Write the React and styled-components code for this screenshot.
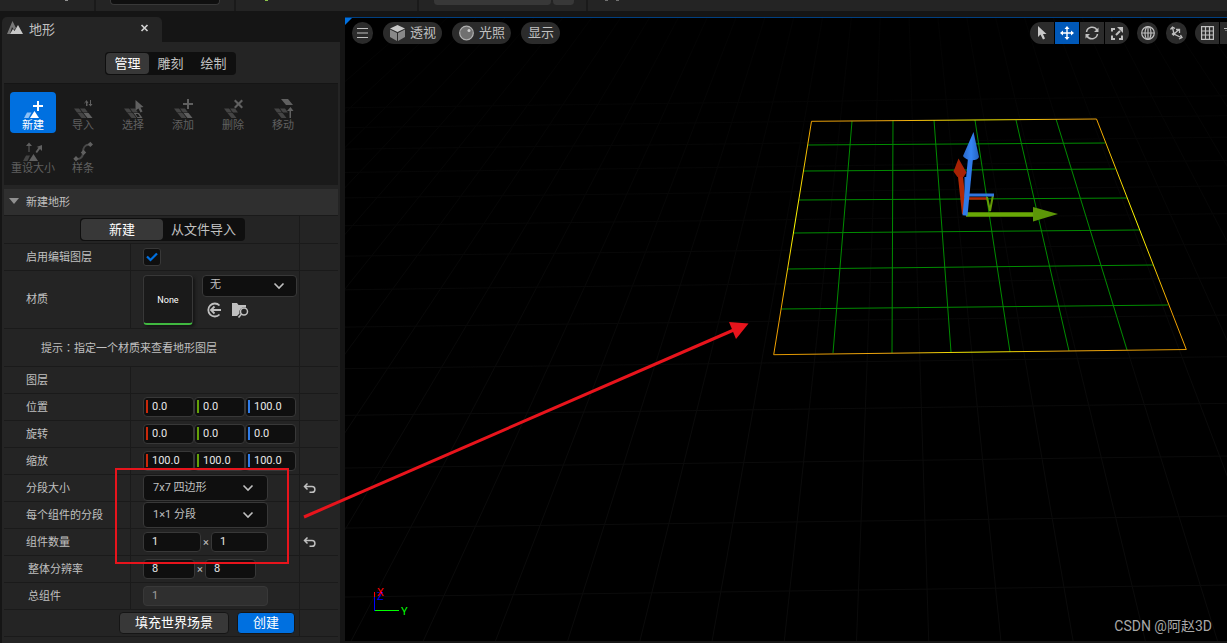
import React, { useState } from 'react'
import styled, { createGlobalStyle } from 'styled-components'

const GlobalStyle = createGlobalStyle`
  * {
    box-sizing: border-box;
  }
  body {
    margin: 0;
    background: #151515;
    overflow: hidden;
  }
  body, button, input, select {
    font-family: Roboto, "Noto Sans CJK SC", sans-serif;
    font-size: 11px;
    color: #c0c0c0;
  }
  button, input, select {
    margin: 0;
    padding: 0;
    border: none;
    outline: none;
  }
  svg {
    display: block;
    flex: none;
  }
`;

const Page = styled.div`
  position: relative;
  display: flex;
  flex-direction: column;
  height: 100vh;
`;

// strip of the main toolbar above the panels
const MainBar = styled.div`
  display: grid;
  grid-template-columns: 96px 140px 183px 169px 1fr;
  flex: none;
  height: 11px;
  background: #242424;
`;
const BarGroup = styled.div`
  display: flex;
  align-items: flex-start;
  padding-left: ${(p) => p.$pad || 0}px;
  border-right: ${(p) => (p.$last ? 'none' : '2px solid #1a1a1a')};
`;
const BarBox = styled.div`
  width: ${(p) => p.$w}px;
  height: 5px;
  background: ${(p) => (p.$light ? '#383838' : '#0f0f0f')};
  border: solid ${(p) => (p.$light ? '#242424' : '#383838')};
  border-width: 0 1px ${(p) => (p.$light ? 0 : 1)}px;
  border-radius: 0 0 4px 4px;
`;
const Speck = styled.span`
  width: 3px;
  height: 1px;
  margin-right: 8px;
  background: ${(p) => p.$color};
`;

const Workspace = styled.div`
  display: flex;
  flex: 1;
  min-height: 0;
  padding: 6px 0 0 2px;
  gap: 5px;
`;

const Panel = styled.aside`
  display: flex;
  flex-direction: column;
  flex: 0 0 338px;
`;
const Tab = styled.div`
  display: flex;
  align-items: center;
  width: 160px;
  height: 25px;
  padding: 0 12px 3px 5px;
  gap: 6px;
  border-radius: 5px 5px 0 0;
  background: #242424;
  font-size: 13px;
  span {
    flex: 1;
  }
  button {
    display: flex;
    background: none;
  }
`;
const PanelBody = styled.div`
  flex: 1;
  min-height: 0;
  padding: 10px 2px 0;
  background: #242424;
`;

const Segments = styled.div`
  display: grid;
  grid-template-columns: ${(p) => p.$cols};
  width: max-content;
  height: 23px;
  margin: ${(p) => p.$margin || 0};
  padding: 1px;
  border-radius: 4px;
  background: #0f0f0f;
`;
const Segment = styled.button`
  border-radius: 4px;
  background: ${(p) => (p.$active ? '#383838' : 'transparent')};
  color: ${(p) => (p.$active ? '#fff' : '#c0c0c0')};
  font-size: 13px;
  line-height: 20px;
`;

const Tools = styled.div`
  display: grid;
  grid-template-columns: repeat(6, 46px);
  grid-auto-rows: 41px;
  gap: 2px 4px;
  height: 102px;
  margin-top: 8px;
  padding: 8px 6px;
  border-top: 1px solid #151515;
  background: #1a1a1a;
`;
const ToolButton = styled.button`
  display: flex;
  flex-direction: column;
  align-items: center;
  padding-top: 6px;
  border-radius: 4px;
  white-space: nowrap;
  line-height: 14px;
  background: ${(p) => (p.$active ? '#0070e0' : 'transparent')};
  color: ${(p) => (p.$active ? '#fff' : '#606060')};
`;

const SectionHead = styled.button`
  display: flex;
  align-items: center;
  gap: 7px;
  width: 100%;
  height: 26px;
  margin-top: 4px;
  padding: 0 0 2px 5px;
  background: #2f2f2f;
`;

const Row = styled.div`
  display: grid;
  grid-template-columns: ${(p) => (p.$wide ? '1fr 39px' : '127px 1fr 39px')};
  height: ${(p) => p.$h || 27}px;
  border-top: 1px solid #1a1a1a;
`;
const PanelEnd = styled.div`
  border-top: 1px solid #1a1a1a;
`;
const Name = styled.label`
  display: flex;
  align-items: center;
  padding: 0 0 3px ${(p) => p.$indent || 22}px;
  border-right: 1px solid #1a1a1a;
`;
const Value = styled.div`
  display: flex;
  align-items: center;
  gap: ${(p) => p.$gap || 0}px;
  padding-left: 12px;
`;
const WideCell = styled.div`
  display: flex;
  align-items: center;
  gap: 8px;
  padding-left: ${(p) => p.$pad}px;
`;
const Hint = styled.p`
  margin: 0;
  padding-bottom: 2px;
  /* this family centres the full-width colon */
  span {
    font-family: "Noto Sans CJK TC", sans-serif;
  }
`;
const Reset = styled.div`
  display: flex;
  align-items: center;
  padding-left: 3px;
  border-left: 1px solid #1a1a1a;
  button {
    background: none;
  }
`;

const Field = styled.input`
  width: ${(p) => p.$w || 51}px;
  height: 20px;
  padding: 0 8px 1px;
  border: 1px solid #383838;
  border-radius: 4px;
  background: ${(p) => (p.disabled ? '#2f2f2f' : '#0f0f0f')};
  color: ${(p) => (p.disabled ? '#a0a0a0' : '#e8e8e8')};
`;
const AxisField = styled.span`
  position: relative;
  display: flex;
  &::before {
    content: '';
    position: absolute;
    left: 3px;
    top: 3px;
    width: 2px;
    height: 13px;
    background: ${(p) => p.$color};
  }
`;

const SelectBox = styled.span`
  display: grid;
  align-items: center;
  width: ${(p) => p.$w || 125}px;
  select {
    grid-area: 1 / 1;
    height: ${(p) => p.$h || 26}px;
    padding: 0 9px 2px;
    padding-left: ${(p) => (p.$w ? 7 : 9)}px;
    appearance: none;
    border: 1px solid #383838;
    border-radius: 4px;
    background: #0f0f0f;
  }
  svg {
    grid-area: 1 / 1;
    justify-self: end;
    margin-right: ${(p) => (p.$w ? 12 : 14)}px;
    pointer-events: none;
  }
`;

const Check = styled.span`
  display: grid;
  place-items: center;
  width: 18px;
  height: 18px;
  input {
    grid-area: 1 / 1;
    appearance: none;
    width: 18px;
    height: 18px;
    border: 1px solid #383838;
    border-radius: 3px;
    background: #0f0f0f;
  }
  svg {
    grid-area: 1 / 1;
    pointer-events: none;
    visibility: hidden;
  }
  input:checked + svg {
    visibility: visible;
  }
`;

const Thumb = styled.div`
  display: flex;
  align-items: center;
  justify-content: center;
  width: 50px;
  height: 50px;
  padding-top: 2px;
  border: 1px solid #383838;
  border-bottom: 2px solid #40b840;
  border-radius: 4px;
  background: #1a1a1a;
  box-shadow: 2px 2px 3px #151515;
  color: #fff;
  font-size: 9px;
`;
const AssetControls = styled.div`
  display: flex;
  flex-direction: column;
  gap: 5px;
  height: 50px;
  div {
    display: flex;
    gap: 10px;
    padding-left: 4px;
  }
  button {
    background: none;
  }
`;

const ActionButton = styled.button`
  width: ${(p) => p.$w}px;
  height: 22px;
  border: 1px solid #151515;
  border-radius: 4px;
  background: ${(p) => (p.$primary ? '#0070e0' : '#383838')};
  color: #fff;
  font-size: 13px;
  line-height: 18px;
`;

const Viewport = styled.main`
  position: relative;
  flex: 1;
  min-width: 0;
  margin-bottom: 2px;
  border-top: 1px solid #003f80;
  background: #000;
  overflow: hidden;
`;
const Scene = styled.svg`
  position: absolute;
  inset: -1px 0 0;
  width: 100%;
  height: calc(100% + 1px);
`;
const Corner = styled.div`
  position: absolute;
  top: -1px;
  left: 0;
  width: 8px;
  height: 8px;
  background: #0070e0;
  clip-path: polygon(0 0, 100% 0, 0 100%);
`;
const ViewBar = styled.div`
  position: relative;
  display: flex;
  justify-content: space-between;
  padding: 4px 0 0 7px;
`;
const ViewGroup = styled.div`
  display: flex;
  gap: ${(p) => p.$gap}px;
`;
const Pill = styled.button`
  display: flex;
  align-items: center;
  justify-content: center;
  gap: 5px;
  width: ${(p) => (p.$round ? '21px' : 'auto')};
  height: 22px;
  padding: ${(p) => (p.$round ? '0' : '0 6px 0 7px')};
  border-radius: 11px;
  background: #2b2b2b;
  font-size: 13px;
  line-height: 20px;
`;
const Joined = styled.div`
  display: flex;
  gap: 1px;
  border-radius: ${(p) => (p.$open ? '11px 0 0 11px' : '11px')};
  overflow: hidden;
`;
const JoinedButton = styled.button`
  display: flex;
  align-items: center;
  justify-content: ${(p) => (p.$cut ? 'flex-end' : 'center')};
  width: ${(p) => (p.$cut ? 7 : 24)}px;
  height: 22px;
  background: ${(p) => (p.$active ? '#0058b8' : '#2b2b2b')};
`;
const AxisMark = styled.svg`
  position: absolute;
  left: 24px;
  bottom: 20px;
`;
const Watermark = styled.div`
  position: absolute;
  right: 15px;
  bottom: 5px;
  color: #a8a8a8;
  font-size: 14px;
  line-height: 20px;
`;
const Notes = styled.svg`
  position: absolute;
  top: 0;
  left: 0;
  pointer-events: none;
`;

const Chevron = () => (
  <svg width="12" height="8" viewBox="0 0 12 8" fill="none" stroke="#c0c0c0" strokeWidth="1.6">
    <path d="M1.5 1.5 6 6l4.500-4.500" />
  </svg>
)

const ResetIcon = () => (
  <svg width="13" height="12" viewBox="0 0 13 12" fill="none" stroke="#c0c0c0" strokeWidth="1.5">
    <path d="M4.500 1.500 1.500 4.500l3 3M1.500 4.500H9a2.800 2.800 0 0 1 0 5.800H6.500" />
  </svg>
)

const tiles = 'M1 8.500h5l3 4H4zM7 8.500h5l3 4h-5zM4.500 13h5l4 5h-5z'
const toolIcons = {
  create: <>
    <path d="M4 12.500h4.500L5.500 18H1z" fill="#8cc0f5" />
    <path d="m11.500 11 4.500 7H7z" />
    <path d="M14 1h2v4h4v2h-4v4h-2V7h-4V5h4z" />
  </>,
  import: <>
    <path d={tiles} opacity=".6" />
    <path d="M10.500 13h5l4 5h-5z" />
    <path d="M13 6V2l-1.500 1.500H11L13.500 0l2 3h-1v3zM17 0h1v4h1.500l-2 2.500-2-2.500H17z" />
  </>,
  select: <>
    <path d={tiles} opacity=".6" />
    <path d="M10.500 13h5.500l3.500 5h-5zm2 1 2 3h2.500l-2-3z" fillRule="evenodd" />
    <path d="m12.500 0 8 7-3 .500 2 4-2 1-2-4-3 2z" />
  </>,
  add: <>
    <path d={tiles} opacity=".6" />
    <path d="M10.500 13h5l4 5h-5z" />
    <path d="M14-1h2v4h4v2h-4v4h-2V5h-4V3h4z" />
  </>,
  remove: <>
    <path d={tiles} opacity=".6" />
    <path d="m11 1 1.500-1.500 3 3 3-3L20 1l-3 3 3 3-1.500 1.500-3-3-3 3L11 7l3-3z" />
  </>,
  move: <>
    <path d={tiles} opacity=".6" />
    <path d="M8-1h7l5 6h-7zM16.500 18v-7H14l3.500-4 3 4H18v7z" />
  </>,
  resize: <>
    <path d="M3 12.500h4L4.500 18H0z" opacity=".6" />
    <path d="m10.500 11 4.500 7H6zM5.500 9V3H3l3-3.500L9 3H6.500v6zM12.500 9l3-4.500L13.500 4l5.500-2v6l-2-2-3 4z" />
  </>,
  spline: <>
    <path d="M3 16h1c4 0 6-3 6-7s2-7.500 6-7.500h1" fill="none" stroke="#484848" strokeWidth="2" />
    <path d="m3 13 2.700 2.700L3 18.400.300 15.700zM10.500 6.800l2.700 2.700-2.700 2.700-2.700-2.700zM17.300-1.300 20 1.400l-2.700 2.700-2.700-2.700z" />
  </>,
}
const tools = [
  ['create', '新建'], ['import', '导入'], ['select', '选择'], ['add', '添加'],
  ['remove', '删除'], ['move', '移动'], ['resize', '重设大小'], ['spline', '样条'],
]

const transforms = [
  ['位置', ['0.0', '0.0', '100.0']],
  ['旋转', ['0.0', '0.0', '0.0']],
  ['缩放', ['100.0', '100.0', '100.0']],
]
const axisColors = ['#c9280a', '#64a008', '#2f7ce8']

// landscape preview: end points of the inner grid lines
const columns = [
  [852, 121, 833, 353], [893, 120, 892, 353], [934, 120, 951, 352],
  [975, 120, 1010, 352], [1016, 120, 1069, 351], [1056, 119, 1127, 350],
]
const rows = [
  [808, 145, 1105, 143], [804, 171, 1115, 169], [799, 200, 1127, 198],
  [794, 233, 1139, 230], [788, 269, 1153, 265], [781, 309, 1168, 305],
]

// floor lines run to one vanishing point above the view
const VANISH = { x: 896, y: -397 }
const floorColumns = Array.from({ length: 30 }, (_, i) => {
  const slope = (733 + 64 * (i - 14) - VANISH.x) / 920
  return [VANISH.x + slope * 414, 17, VANISH.x + slope * 1040, 643]
})
const floorRows = Array.from({ length: 14 }, (_, i) => {
  const y = VANISH.y + 1 / (0.001006 + 0.000075 * i)
  return [345, y, 1227, y - 12]
})

const Lines = ({ items }) => items.map(([x1, y1, x2, y2]) => (
  <line key={`${x1}-${y1}`} x1={x1} y1={y1} x2={x2} y2={y2} />
))

const Landscape = () => (
  <Scene viewBox="345 17 882 624" preserveAspectRatio="xMinYMin slice">
    <defs>
      <linearGradient id="edge" x1="0" y1="0" x2="1" y2="0">
        <stop offset="0" stopColor="#e09600" />
        <stop offset=".3" stopColor="#f0a810" />
        <stop offset=".5" stopColor="#f0f000" />
        <stop offset=".7" stopColor="#f0a810" />
        <stop offset="1" stopColor="#e09600" />
      </linearGradient>
      <linearGradient id="side" x1="0" y1="0" x2="0" y2="1">
        <stop offset="0" stopColor="#f0a000" />
        <stop offset=".45" stopColor="#ffff00" />
        <stop offset=".8" stopColor="#f0a000" />
      </linearGradient>
      <linearGradient id="fade" x1="0" y1="0" x2="0" y2="1">
        <stop offset="0" stopColor="#000" stopOpacity=".7" />
        <stop offset=".7" stopColor="#000" stopOpacity="0" />
      </linearGradient>
      <linearGradient id="cone" x1="0" y1="0" x2="1" y2="0">
        <stop offset="0" stopColor="#2a68c8" />
        <stop offset=".5" stopColor="#3585f5" />
        <stop offset="1" stopColor="#2462c0" />
      </linearGradient>
    </defs>
    <g stroke="#0b0b0b">
      <Lines items={floorColumns} />
      <Lines items={floorRows} />
    </g>
    <rect x="345" y="17" width="882" height="624" fill="url(#fade)" />
    <g stroke="#008c00">
      <Lines items={columns} />
      <Lines items={rows} />
    </g>
    <g fill="none">
      <path d="M811.500 121.300 1096.500 119M773.700 354.700 1186.300 349.500" stroke="url(#edge)" />
      <path d="M811.500 121.300 773.700 354.700M1096.500 119l89.800 230.500" stroke="url(#side)" />
    </g>
    <path d="M964.500 214 960 172" stroke="#b02806" strokeWidth="5" />
    <path d="m958.500 158.500 8 14-3 4.500h-6l-4-5.500z" fill="#a82204" />
    <path d="M969 198.500h18" stroke="#b02806" strokeWidth="2.500" />
    <path d="m987 197 3 14 3-16" stroke="#649a06" strokeWidth="2" fill="none" />
    <path d="M966 177v20M968 195h26" stroke="#2f75dd" strokeWidth="3" />
    <path d="M966 214.500h68" stroke="#69a806" strokeWidth="4.500" />
    <path d="m1033 207 25 7-25 7.500z" fill="#5c9608" />
    <path d="M965 215.500 970.500 158" stroke="#2f7ae8" strokeWidth="5" />
    <path d="m973.500 132 5.500 25c-2 5-13 4-16-1z" fill="url(#cone)" />
  </Scene>
)

const ToolButtons = () => {
  const [tool, setTool] = useState('create');
  return (
    <Tools>
      {tools.map(([id, label]) => (
        <ToolButton key={id} $active={tool === id} onClick={() => setTool(id)}>
          <svg width="21" height="21" viewBox="0 -2 21 21" fill="currentColor">{toolIcons[id]}</svg>
          {label}
        </ToolButton>
      ))}
    </Tools>
  )
}

const ResetCell = ({ active }) => (
  <Reset>{active && <button aria-label="重置"><ResetIcon /></button>}</Reset>
)

const LandscapePanel = () => (
  <Panel>
    <Tab>
      <svg width="16" height="14" viewBox="0 0 16 14">
        <path d="M0 13 5.500 0 9 7l-2 2-2-3-2 7z" fill="#787878" />
        <path d="m3 13 3-5 1.500 2L11 4l5 9z" fill="#c8c8c8" />
      </svg>
      <span>地形</span>
      <button aria-label="关闭">
        <svg width="11" height="10" viewBox="0 0 11 10" stroke="#d0d0d0" strokeWidth="1.700">
          <path d="m2.500 2 6 6M8.500 2l-6 6" />
        </svg>
      </button>
    </Tab>
    <PanelBody>
      <Segments $cols="repeat(3, 43px)" $margin="0 0 0 101px">
        <Segment $active>管理</Segment>
        <Segment>雕刻</Segment>
        <Segment>绘制</Segment>
      </Segments>
      <ToolButtons />
      <SectionHead>
        <svg width="10" height="6" viewBox="0 0 10 6"><path d="M0 0h10L5 6z" fill="#909090" /></svg>
        新建地形
      </SectionHead>

      <Row $wide $h={28}>
        <WideCell $pad={76}>
          <Segments $cols="82px 81px">
            <Segment $active>新建</Segment>
            <Segment>从文件导入</Segment>
          </Segments>
        </WideCell>
        <ResetCell />
      </Row>
      <Row>
        <Name htmlFor="layers">启用编辑图层</Name>
        <Value>
          <Check>
            <input id="layers" type="checkbox" defaultChecked />
            <svg width="12" height="10" viewBox="0 0 12 10" fill="none" stroke="#0070e0" strokeWidth="2.200">
              <path d="m1 4.500 3.500 3.500L11 1.500" />
            </svg>
          </Check>
        </Value>
        <ResetCell />
      </Row>
      <Row $h={58}>
        <Name htmlFor="material">材质</Name>
        <Value $gap={9}>
          <Thumb>None</Thumb>
          <AssetControls>
            <SelectBox $w={95} $h={22}>
              <select id="material"><option>无</option></select>
              <Chevron />
            </SelectBox>
            <div>
              <button aria-label="使用所选资产">
                <svg width="16" height="16" viewBox="0 0 16 16" fill="none" stroke="#c0c0c0" strokeWidth="1.800">
                  <path d="M13.500 3.500a6.500 6.500 0 1 0 0 9M15 8H5M8.500 4.500 5 8l3.500 3.500" />
                </svg>
              </button>
              <button aria-label="浏览资产">
                <svg width="17" height="16" viewBox="0 0 17 16">
                  <path d="M0 1h5l1.500 2H14v2.500a5 5 0 0 0-6.500 6L5 14H0z" fill="#c0c0c0" />
                  <circle cx="12" cy="9.500" r="3.500" fill="#242424" stroke="#c0c0c0" strokeWidth="1.500" />
                  <path d="m9.500 12-3 3.500" stroke="#c0c0c0" strokeWidth="1.600" />
                </svg>
              </button>
            </div>
          </AssetControls>
        </Value>
        <ResetCell />
      </Row>
      <Row $wide $h={38}>
        <WideCell $pad={37}>
          <Hint>提示<span lang="zh-TW">：</span>指定一个材质来查看地形图层</Hint>
        </WideCell>
        <ResetCell />
      </Row>
      <Row>
        <Name as="div">图层</Name>
        <Value />
        <ResetCell />
      </Row>
      {transforms.map(([label, values]) => (
        <Row key={label}>
          <Name as="div">{label}</Name>
          <Value>
            {values.map((value, i) => (
              <AxisField key={axisColors[i]} $color={axisColors[i]}>
                <Field aria-label={`${label} ${'XYZ'[i]}`} defaultValue={value} />
              </AxisField>
            ))}
          </Value>
          <ResetCell />
        </Row>
      ))}
      <Row>
        <Name htmlFor="section-size">分段大小</Name>
        <Value>
          <SelectBox>
            <select id="section-size"><option>7x7 四边形</option></select>
            <Chevron />
          </SelectBox>
        </Value>
        <ResetCell active />
      </Row>
      <Row>
        <Name htmlFor="sections">每个组件的分段</Name>
        <Value>
          <SelectBox>
            <select id="sections"><option>1×1 分段</option></select>
            <Chevron />
          </SelectBox>
        </Value>
        <ResetCell />
      </Row>
      <Row>
        <Name htmlFor="count">组件数量</Name>
        <Value $gap={2}>
          <Field id="count" $w={58} defaultValue="1" />
          ×
          <Field aria-label="组件数量 Y" $w={57} defaultValue="1" />
        </Value>
        <ResetCell active />
      </Row>
      <Row>
        <Name htmlFor="resolution" $indent={24}>整体分辨率</Name>
        <Value $gap={2}>
          <Field id="resolution" $w={52} defaultValue="8" />
          ×
          <Field aria-label="整体分辨率 Y" defaultValue="8" />
        </Value>
        <ResetCell />
      </Row>
      <Row>
        <Name htmlFor="total" $indent={24}>总组件</Name>
        <Value><Field id="total" $w={125} defaultValue="1" disabled /></Value>
        <ResetCell />
      </Row>
      <Row $wide>
        <WideCell $pad={115}>
          <ActionButton $w={110}>填充世界场景</ActionButton>
          <ActionButton $w={58} $primary>创建</ActionButton>
        </WideCell>
        <ResetCell />
      </Row>
      <PanelEnd />
    </PanelBody>
  </Panel>
)

const LevelViewport = () => (
  <Viewport>
    <Landscape />
    <Corner />
    <ViewBar>
      <ViewGroup $gap={10}>
        <Pill $round aria-label="菜单">
          <svg width="11" height="10" viewBox="0 0 11 10" stroke="#c0c0c0">
            <path d="M0 .500h11M0 5h11M0 9.500h11" />
          </svg>
        </Pill>
        <Pill>
          <svg width="15" height="16" viewBox="0 0 15 16">
            <path d="M7.500 0 15 3.500 7.500 7 0 3.500z" fill="#c8c8c8" />
            <path d="M0 4.500 7 8v8l-7-4zM15 4.500 8 8v8l7-4z" fill="#888" />
          </svg>
          透视
        </Pill>
        <Pill>
          <svg width="15" height="16" viewBox="0 0 15 16">
            <circle cx="7.500" cy="8" r="6.800" fill="#707070" stroke="#b0b0b0" strokeWidth="1.200" />
            <circle cx="10" cy="5.500" r="1.500" fill="#d0d0d0" />
          </svg>
          光照
        </Pill>
        <Pill>显示</Pill>
      </ViewGroup>
      <ViewGroup $gap={8}>
        <Joined>
          <JoinedButton aria-label="选择">
            <svg width="10" height="14" viewBox="0 0 10 14">
              <path d="M1 0v11l2.500-2.500L6 13.500l2-1L6 8h3.500z" fill="#c8c8c8" />
            </svg>
          </JoinedButton>
          <JoinedButton aria-label="平移" $active>
            <svg width="14" height="14" viewBox="0 0 14 14" fill="#fff">
              <path d="M6.300 3v3.300H3V4.500L0 7l3 2.500V7.700h3.300V11H4.500L7 14l2.500-3H7.700V7.700H11v1.800L14 7l-3-2.500v1.800H7.700V3h1.800L7 0 4.500 3z" />
            </svg>
          </JoinedButton>
          <JoinedButton aria-label="旋转">
            <svg width="14" height="14" viewBox="0 0 14 14" fill="none" stroke="#c0c0c0" strokeWidth="1.500">
              <path d="M1.500 6a5.700 5.700 0 0 1 10.500-2M12.500 8a5.700 5.700 0 0 1-10.500 2" />
              <path d="M13.500 1.500V6H9zM.500 12.500V8H5z" fill="#c0c0c0" stroke="none" />
            </svg>
          </JoinedButton>
          <JoinedButton aria-label="缩放">
            <svg width="12" height="13" viewBox="0 0 12 13" fill="none" stroke="#c0c0c0" strokeWidth="2">
              <path d="M4 2H1v2.500M1 8.500V12h3M8 12h3V8.500M5 8l4-4" />
              <path d="M12 0v6L6 0z" fill="#c0c0c0" stroke="none" />
            </svg>
          </JoinedButton>
        </Joined>
        <Pill $round aria-label="坐标系">
          <svg width="14" height="14" viewBox="0 0 14 14" fill="none" stroke="#c0c0c0" strokeWidth="1.200">
            <circle cx="7" cy="7" r="6.300" />
            <ellipse cx="7" cy="7" rx="3" ry="6.300" />
            <path d="M7 1v12M1 7h12" />
          </svg>
        </Pill>
        <Pill $round aria-label="表面对齐">
          <svg width="14" height="14" viewBox="0 0 14 14" fill="none" stroke="#c0c0c0" strokeWidth="1.300">
            <path d="M2.500 1.500 4 8l7 3.500M4 8l5-4.500M.500 3.500l2-2.500 2.500 1.500M10.500 9l1.500 2.500-3 1.500M6 3.500h3.500V7" />
            <path d="m3.500 6 2 2-2 2-2-2z" fill="#c0c0c0" stroke="none" />
          </svg>
        </Pill>
        <Joined $open>
          <JoinedButton aria-label="网格">
            <svg width="13" height="14" viewBox="0 0 13 14" fill="none" stroke="#c0c0c0" strokeWidth="1.200">
              <path d="M.600.600h11.800v12.800H.600zM4.500.600v12.800M8.500.600v12.800M.600 5h11.800M.600 9h11.800" />
            </svg>
          </JoinedButton>
          <JoinedButton aria-label="网格大小" $cut>
            <svg width="3" height="12" viewBox="0 0 3 12" stroke="#c0c0c0">
              <path d="M0 1.500h3M2 3v1" />
            </svg>
          </JoinedButton>
        </Joined>
      </ViewGroup>
    </ViewBar>
    <AxisMark width="48" height="50" viewBox="0 0 48 50" fontSize="11">
      <path d="M5.500 21v5" stroke="#f00" />
      <path d="M5.500 26v14" stroke="#00f" />
      <path d="M6 39.500h24" stroke="#0f0" />
      <text x="8" y="29" fill="#00f">Z</text>
      <text x="8" y="25" fill="#f00">X</text>
      <text x="32" y="44" fill="#0f0">Y</text>
    </AxisMark>
    <Watermark>CSDN @阿赵3D</Watermark>
  </Viewport>
)

const App = () => {
  return (
    <>
      <GlobalStyle />
      <Page>
        <MainBar>
          <BarGroup $pad={65}><Speck $color="#909090" /></BarGroup>
          <BarGroup $pad={14}><BarBox $w={110} /></BarGroup>
          <BarGroup $pad={29}><Speck $color="#8bc34a" /></BarGroup>
          <BarGroup $pad={14}>
            <BarBox $w={119} $light />
            <BarBox $w={23} $light />
          </BarGroup>
          <BarGroup $pad={17} $last>
            <Speck $color="#707070" />
            <Speck $color="#707070" />
          </BarGroup>
        </MainBar>
        <Workspace>
          <LandscapePanel />
          <LevelViewport />
        </Workspace>
        {/* red frame and arrow over the section settings */}
        <Notes width="760" height="600" viewBox="0 0 760 600">
          <rect x="116" y="469" width="172" height="94" fill="none" stroke="#e8141c" strokeWidth="2" />
          <path d="M304 517 736 329" stroke="#e8141c" strokeWidth="3" />
          <path d="m729 322 19.500 1.500L736 339z" fill="#e8141c" />
        </Notes>
      </Page>
    </>
  )
}

export default App
